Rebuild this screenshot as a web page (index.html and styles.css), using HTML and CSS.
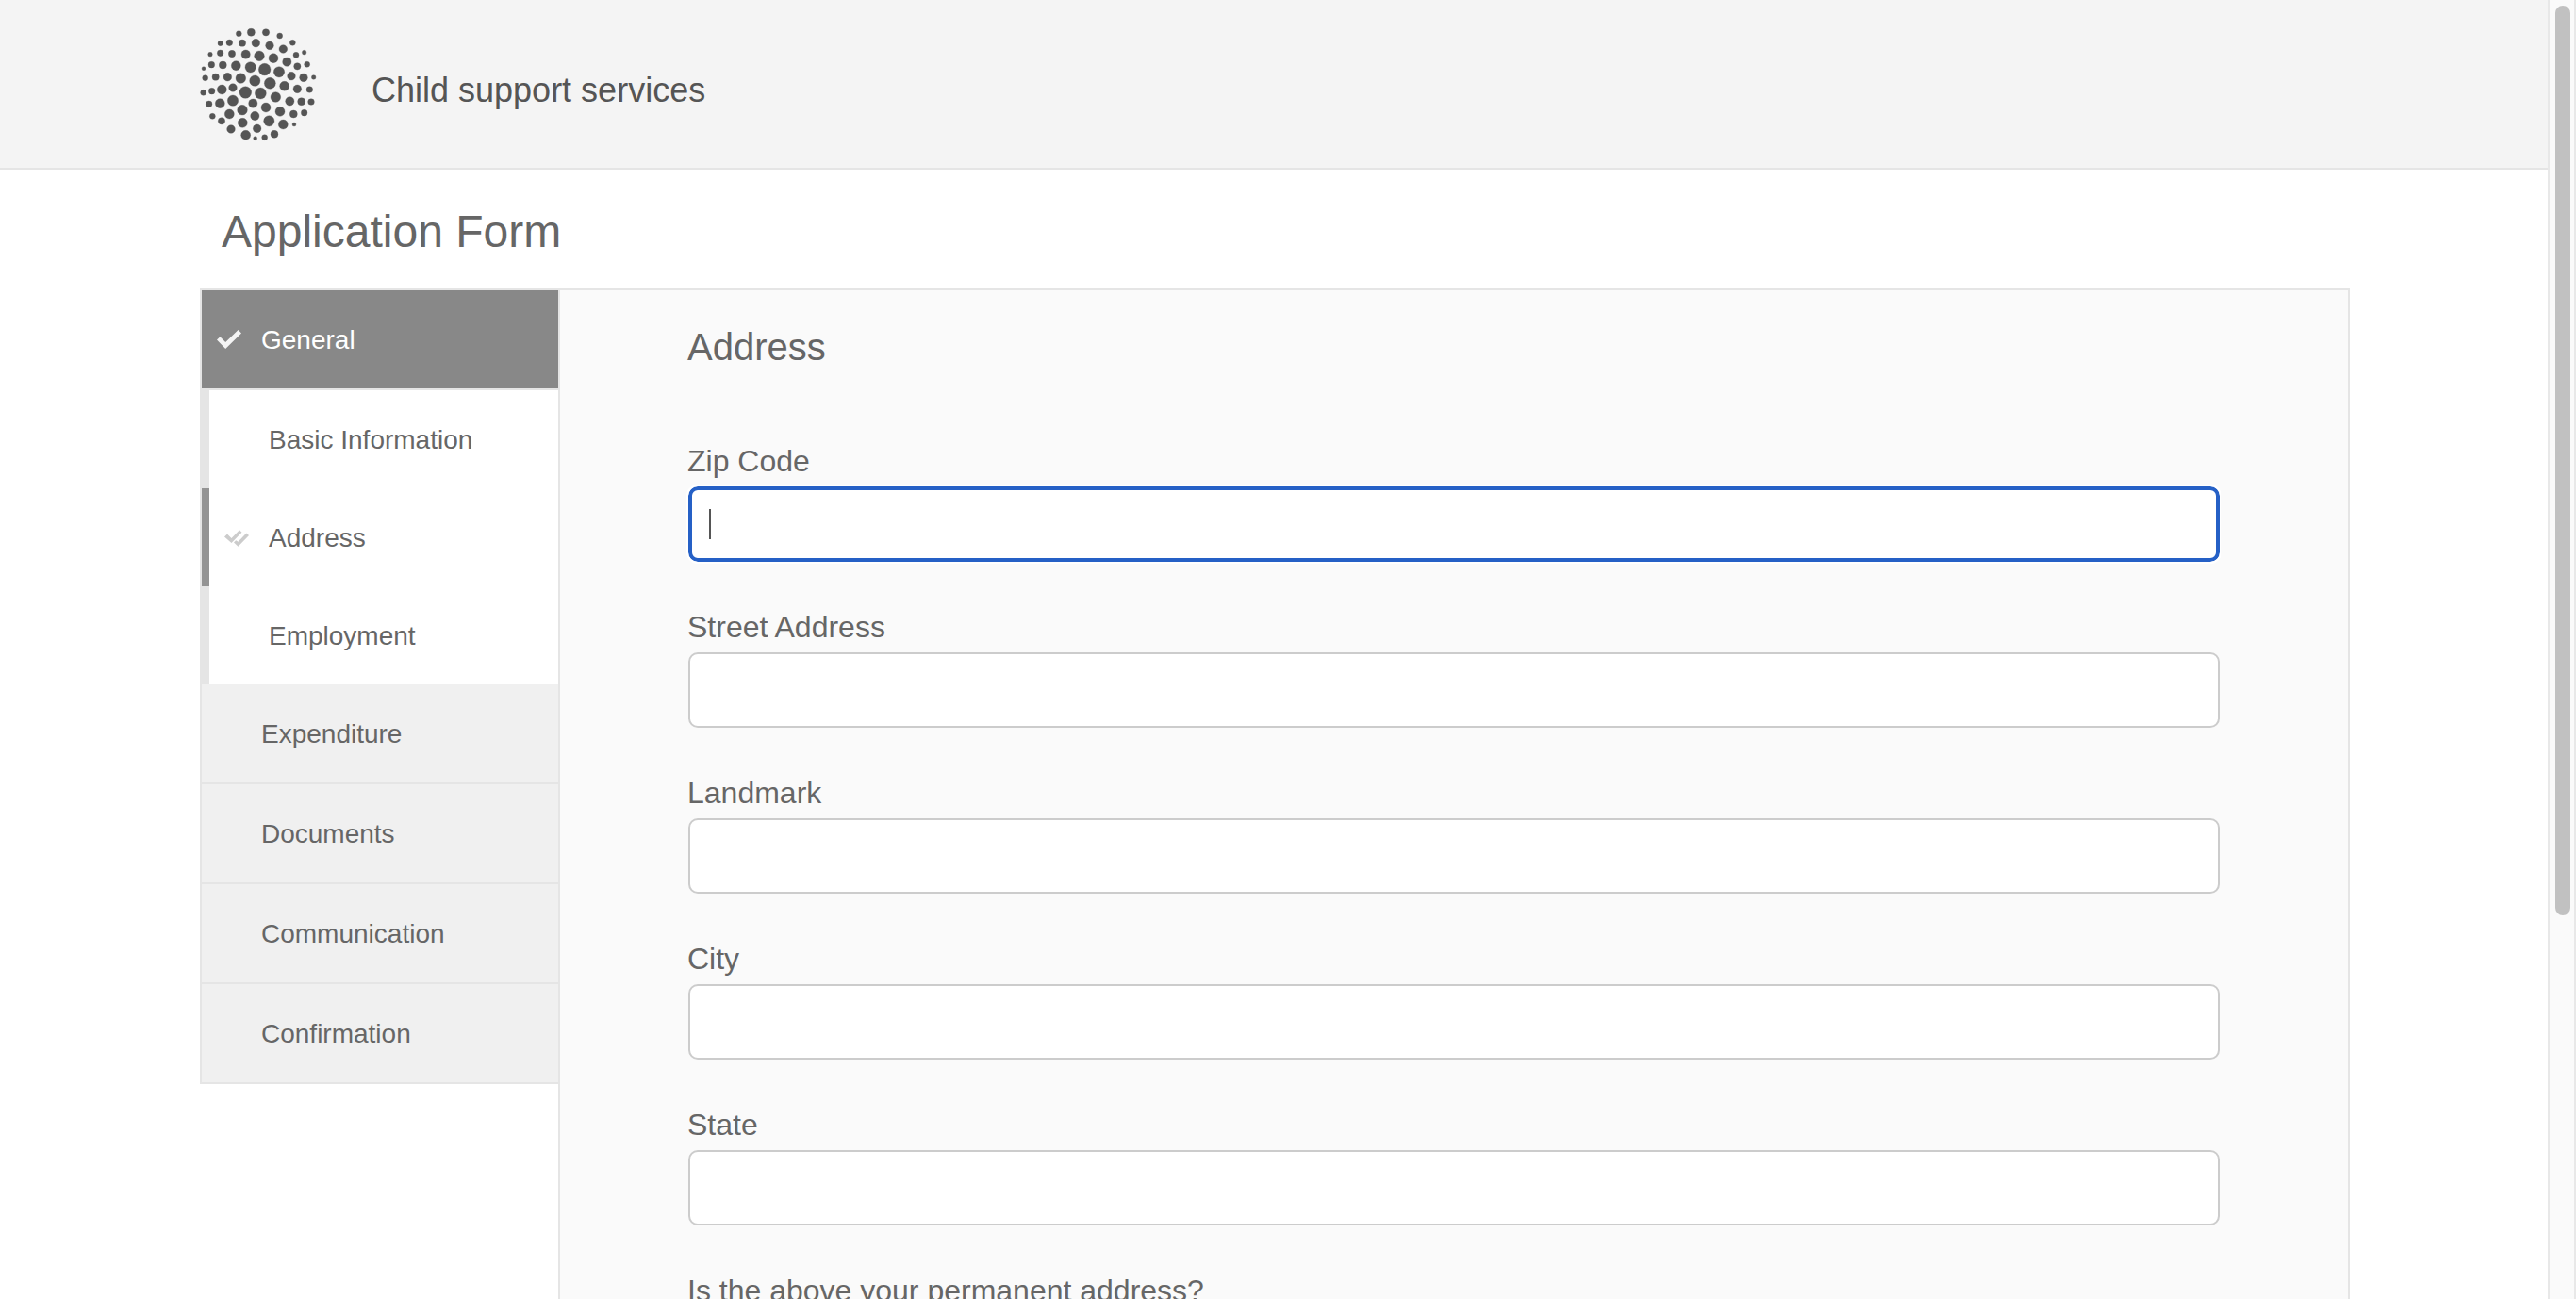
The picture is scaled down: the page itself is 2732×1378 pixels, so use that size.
FILE: index.html
```html
<!DOCTYPE html>
<html lang="en">
<head>
<meta charset="utf-8">
<meta name="viewport" content="width=device-width, initial-scale=1">
<title>Application Form - Child support services</title>
<link rel="stylesheet" href="styles.css">
</head>
<body>
<div class="page">
  <header class="site-header">
    <div class="container brand">
      <svg class="logo" viewBox="36 24 372 366" aria-hidden="true">
        <circle cx="160" cy="47" r="9"/><circle cx="199" cy="43" r="12"/><circle cx="246" cy="43" r="11"/><circle cx="290" cy="54" r="9"/>
        <circle cx="101" cy="78" r="8"/><circle cx="130" cy="76" r="10"/><circle cx="171" cy="77" r="11"/><circle cx="214" cy="77" r="13"/><circle cx="258" cy="85" r="13"/><circle cx="301" cy="96" r="13"/><circle cx="331" cy="76" r="9"/>
        <circle cx="69" cy="113" r="7"/><circle cx="101" cy="109" r="10"/><circle cx="138" cy="111" r="11"/><circle cx="182" cy="113" r="14"/><circle cx="225" cy="118" r="16"/><circle cx="270" cy="125" r="15"/><circle cx="313" cy="137" r="14"/><circle cx="342" cy="115" r="9"/><circle cx="368" cy="107" r="7"/>
        <circle cx="48" cy="158" r="6"/><circle cx="73" cy="146" r="10"/><circle cx="109" cy="147" r="12"/><circle cx="151" cy="149" r="15"/><circle cx="197" cy="154" r="17"/><circle cx="242" cy="161" r="19"/><circle cx="288" cy="169" r="17"/><circle cx="346" cy="151" r="11"/><circle cx="377" cy="145" r="9"/>
        <circle cx="53" cy="188" r="9"/><circle cx="86" cy="185" r="11"/><circle cx="124" cy="185" r="13"/><circle cx="166" cy="189" r="16"/><circle cx="211" cy="197" r="17"/><circle cx="259" cy="205" r="18"/><circle cx="305" cy="214" r="15"/><circle cx="327" cy="182" r="13"/><circle cx="366" cy="187" r="13"/><circle cx="398" cy="186" r="7"/>
        <circle cx="47" cy="235" r="9"/><circle cx="74" cy="230" r="10"/><circle cx="106" cy="225" r="15"/><circle cx="141" cy="219" r="13"/><circle cx="181" cy="234" r="19"/><circle cx="229" cy="237" r="18"/><circle cx="277" cy="249" r="16"/><circle cx="346" cy="223" r="13"/><circle cx="385" cy="225" r="10"/>
        <circle cx="65" cy="271" r="10"/><circle cx="100" cy="269" r="15"/><circle cx="141" cy="260" r="17"/><circle cx="205" cy="269" r="14"/><circle cx="246" cy="282" r="15"/><circle cx="322" cy="262" r="14"/><circle cx="359" cy="263" r="12"/><circle cx="390" cy="264" r="10"/>
        <circle cx="76" cy="310" r="9"/><circle cx="130" cy="303" r="15"/><circle cx="171" cy="290" r="16"/><circle cx="211" cy="309" r="14"/><circle cx="291" cy="295" r="15"/><circle cx="334" cy="303" r="12"/><circle cx="368" cy="299" r="10"/>
        <circle cx="105" cy="325" r="11"/><circle cx="172" cy="331" r="15"/><circle cx="256" cy="325" r="17"/><circle cx="301" cy="336" r="15"/><circle cx="336" cy="336" r="6"/>
        <circle cx="135" cy="351" r="13"/><circle cx="182" cy="370" r="15"/><circle cx="218" cy="349" r="13"/><circle cx="212" cy="380" r="6"/><circle cx="242" cy="377" r="9"/><circle cx="273" cy="367" r="12"/>
      </svg>
      <div class="brand-name">Child support services</div>
    </div>
  </header>

  <main class="container">
    <h1 class="page-title">Application Form</h1>
    <div class="wizard">
      <nav class="steps" aria-label="Form steps">
        <ul class="step-list">
          <li>
            <a class="step step-open" href="#general">
              <svg class="step-icon" viewBox="0 0 26 20" aria-hidden="true"><path d="M0 10.5 3.4 7.2 9.2 13 22.6 0 26 3.4 9.2 20z"/></svg>
              General
            </a>
            <ul class="substeps">
              <li><a class="substep" href="#basic">Basic Information</a></li>
              <li>
                <a class="substep substep-current" href="#address" aria-current="step">
                  <svg class="step-icon" viewBox="0 0 26 20" aria-hidden="true"><path d="M0 9.5 3 6.5 7.500 11 16 2.300 18.500 4.800 7.500 16zM10 15.500 12.200 13.300 14.500 14.800 23.300 5.400 26 8 14.500 19.800z"/></svg>
                  Address
                </a>
              </li>
              <li><a class="substep" href="#employment">Employment</a></li>
            </ul>
          </li>
          <li><a class="step" href="#expenditure">Expenditure</a></li>
          <li><a class="step" href="#documents">Documents</a></li>
          <li><a class="step" href="#communication">Communication</a></li>
          <li><a class="step" href="#confirmation">Confirmation</a></li>
        </ul>
      </nav>

      <form class="panel">
        <h2 class="panel-title">Address</h2>
        <div class="fields">
          <div class="field field-active"><label for="zip">Zip Code</label><input id="zip" type="text" autofocus><span class="caret" aria-hidden="true"></span></div>
          <div class="field"><label for="street">Street Address</label><input id="street" type="text"></div>
          <div class="field"><label for="landmark">Landmark</label><input id="landmark" type="text"></div>
          <div class="field"><label for="city">City</label><input id="city" type="text"></div>
          <div class="field"><label for="state">State</label><input id="state" type="text"></div>
          <div class="field"><label for="permanent">Is the above your permanent address?</label><input id="permanent" type="text"></div>
        </div>
      </form>
    </div>
  </main>
</div>
<div class="scroll-rail" aria-hidden="true"><div class="scroll-thumb"></div></div>
</body>
</html>
```
FILE: styles.css
```css
* {
  box-sizing: border-box;
}

body {
  margin: 0;
  background: #fff;
  color: #666;
  font-family: Arial, "Liberation Sans", sans-serif;
  font-size: 32px;
}

.page {
  height: 100vh;
  padding-right: 28px;
  overflow-y: auto;
  scrollbar-width: none;
}

.container {
  max-width: 2280px;
  margin: 0 auto;
}

.site-header {
  padding: 28px 0;
  background: #f4f4f4;
  border-bottom: 2px solid #e5e5e5;
}

.brand {
  display: flex;
  align-items: center;
  gap: 58px;
}

.logo {
  width: 124px;
  height: 122px;
  fill: #555;
  stroke: #555;
  stroke-width: 1;
}

.brand-name {
  padding-top: 14px;
  color: #555;
  font-size: 36px;
}

.page-title {
  margin: 0;
  padding: 6px 23px 0;
  font-size: 48px;
  font-weight: 400;
  line-height: 120px;
}

.wizard {
  display: flex;
  align-items: flex-start;
}

.steps {
  flex: 0 0 380px;
  border-top: 2px solid #e5e5e5;
  border-left: 2px solid #e5e5e5;
}

.step-list,
.substeps {
  margin: 0;
  padding: 0;
  list-style: none;
}

.step,
.substep {
  position: relative;
  display: block;
  padding: 2px 0 0 63px;
  color: #666;
  font-size: 28px;
  line-height: 102px;
  text-decoration: none;
}

.step {
  background: #f0f0f0;
  border-bottom: 2px solid #e5e5e5;
}

.step-open {
  background: #888;
  color: #fff;
}

.substep {
  background: #fff;
  border-left: 8px solid #e5e5e5;
}

.substep-current {
  border-left-color: #949494;
}

.step-icon {
  position: absolute;
  top: 42px;
  left: 16px;
  width: 26px;
  height: 20px;
  fill: #f4f4f4;
}

.substep .step-icon {
  fill: #ccc;
}

.panel {
  flex: 1;
  padding: 36px 135px;
  background: #fafafa;
  border: 2px solid #e5e5e5;
}

.panel-title {
  margin: 0 0 78px;
  font-size: 40px;
  font-weight: 400;
  line-height: 48px;
}

.fields {
  display: grid;
  gap: 50px;
}

.field {
  display: grid;
  gap: 8px;
}

.field label {
  line-height: 38px;
}

.field input {
  height: 80px;
  margin: 0 1px;
  padding: 0 20px;
  background: #fff;
  border: 2px solid #ccc;
  border-radius: 10px;
  color: #555;
  font: inherit;
}

.field input:focus {
  padding: 0 18px;
  border: 4px solid #2560c6;
  outline: 2px solid #fff;
  caret-color: transparent;
}

/* Text cursor, two pixels wide */
.field-active {
  position: relative;
}

.caret {
  position: absolute;
  bottom: 24px;
  left: 23px;
  width: 2px;
  height: 32px;
  background: #555;
}

.scroll-rail {
  position: fixed;
  inset: 0 0 0 auto;
  width: 30px;
  padding: 6px 4px 6px 6px;
  background: #fafafa;
  border: solid #e8e8e8;
  border-width: 0 2px;
}

.scroll-thumb {
  width: 16px;
  height: 70vh;
  border-radius: 8px;
  background: #c1c1c1;
}
```
